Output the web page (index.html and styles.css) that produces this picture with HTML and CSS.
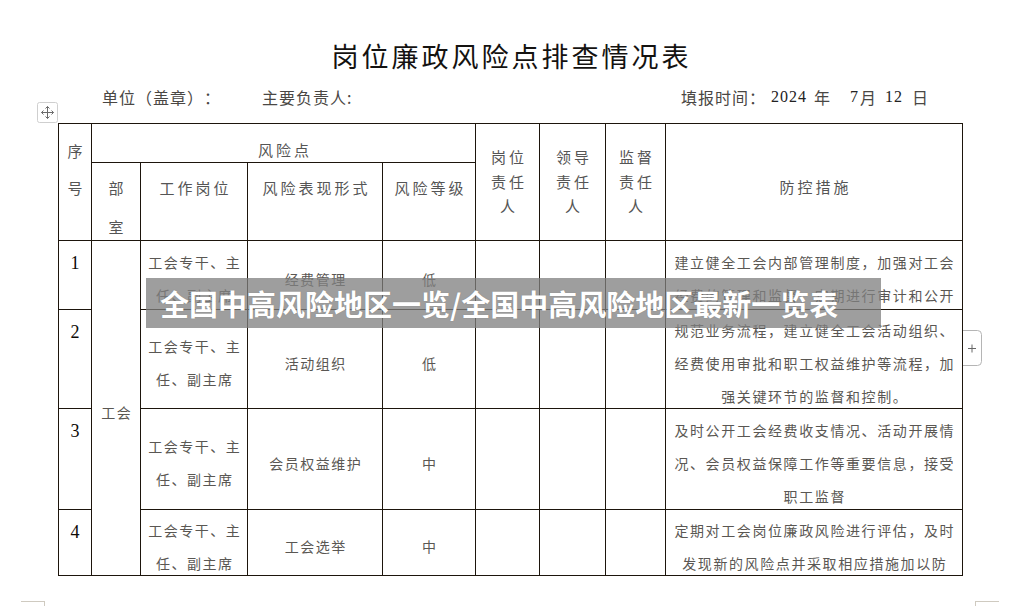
FILE: index.html
```html
<!DOCTYPE html>
<html lang="zh-CN">
<head>
<meta charset="utf-8">
<title>岗位廉政风险点排查情况表</title>
<link rel="stylesheet" href="styles.css">
</head>
<body>
<div class="page">
  <div class="doc">
    <h1 class="title">岗位廉政风险点排查情况表</h1>
    <div class="meta">
      <span class="unit">单位（盖章）：</span>
      <span class="owner">主要负责人:</span>
      <span class="date">填报时间：<span class="num n-year">2024</span><span class="u u-year">年</span><span class="num n-mon">7</span><span class="u u-mon">月</span><span class="num n-day">12</span><span class="u u-day">日</span></span>
    </div>
    <table class="grid">
      <colgroup>
        <col class="c-seq"><col class="c-dept"><col class="c-post"><col class="c-form"><col class="c-level">
        <col class="c-p1"><col class="c-p2"><col class="c-p3"><col class="c-measure">
      </colgroup>
      <tr class="h1">
        <td class="hd h-seq" rowspan="2">序<br>号</td>
        <td class="hd h-group" colspan="4">风险点</td>
        <td class="hd h-person" rowspan="2">岗位<br>责任<br>人</td>
        <td class="hd h-person" rowspan="2">领导<br>责任<br>人</td>
        <td class="hd h-person" rowspan="2">监督<br>责任<br>人</td>
        <td class="hd h-measure" rowspan="2">防控措施</td>
      </tr>
      <tr class="h2">
        <td class="hd h-sub"><div class="drop">部<br>室</div></td>
        <td class="hd h-sub">工作岗位</td>
        <td class="hd h-sub">风险表现形式</td>
        <td class="hd h-sub">风险等级</td>
      </tr>
      <tr class="r1">
        <td class="seq">1</td>
        <td class="cell" rowspan="4"><div class="stack"><div>工会</div></div></td>
        <td class="cell"><div class="stack"><div>工会专干、主</div><div>任、副主席</div></div></td>
        <td class="cell"><div class="stack"><div>经费管理</div></div></td>
        <td class="cell"><div class="stack"><div>低</div></div></td>
        <td class="cell"></td><td class="cell"></td><td class="cell"></td>
        <td class="cell measure"><div class="stack"><div>建立健全工会内部管理制度，加强对工会</div><div>经费的管理和监督，定期进行审计和公开</div></div></td>
      </tr>
      <tr class="r2">
        <td class="seq">2</td>
        <td class="cell"><div class="stack"><div>工会专干、主</div><div>任、副主席</div></div></td>
        <td class="cell"><div class="stack"><div>活动组织</div></div></td>
        <td class="cell"><div class="stack"><div>低</div></div></td>
        <td class="cell"></td><td class="cell"></td><td class="cell"></td>
        <td class="cell measure"><div class="stack"><div>规范业务流程，建立健全工会活动组织、</div><div>经费使用审批和职工权益维护等流程，加</div><div>强关键环节的监督和控制。</div></div></td>
      </tr>
      <tr class="r3">
        <td class="seq">3</td>
        <td class="cell"><div class="stack"><div>工会专干、主</div><div>任、副主席</div></div></td>
        <td class="cell"><div class="stack"><div>会员权益维护</div></div></td>
        <td class="cell"><div class="stack"><div>中</div></div></td>
        <td class="cell"></td><td class="cell"></td><td class="cell"></td>
        <td class="cell measure"><div class="stack"><div>及时公开工会经费收支情况、活动开展情</div><div>况、会员权益保障工作等重要信息，接受</div><div>职工监督</div></div></td>
      </tr>
      <tr class="r4">
        <td class="seq">4</td>
        <td class="cell"><div class="stack"><div>工会专干、主</div><div>任、副主席</div></div></td>
        <td class="cell"><div class="stack"><div>工会选举</div></div></td>
        <td class="cell"><div class="stack"><div>中</div></div></td>
        <td class="cell"></td><td class="cell"></td><td class="cell"></td>
        <td class="cell measure"><div class="stack"><div>定期对工会岗位廉政风险进行评估，及时</div><div>发现新的风险点并采取相应措施加以防</div></div></td>
      </tr>
    </table>
  </div>

  <div class="move-handle" aria-hidden="true">
    <svg width="21" height="21" viewBox="0 0 21 21">
      <rect x="0.5" y="0.5" width="20" height="20" rx="2" fill="#fff" stroke="#cfcfcf"/>
      <g stroke="#6a6a6a" fill="none" stroke-width="1">
        <path d="M10.5 4.5v12M4.5 10.5h12"/>
        <path d="M8.5 6.5l2-2 2 2M8.5 14.5l2 2 2-2M6.5 8.5l-2 2 2 2M14.5 8.5l2 2-2 2"/>
      </g>
    </svg>
  </div>

  <div class="add-handle" aria-hidden="true">
    <svg width="20" height="37" viewBox="0 0 20 37">
      <path d="M0 0.5H14.5Q18.5 0.5 18.5 4.5V31.5Q18.5 35.5 14.5 35.5H0" fill="none" stroke="#b5b5b5"/>
      <path d="M5 18.5h8M9 14.5v8" stroke="#666" fill="none"/>
    </svg>
  </div>

  <div class="mark mark-left" aria-hidden="true"></div>
  <div class="mark mark-right" aria-hidden="true"></div>

  <div class="banner">全国中高风险地区一览/全国中高风险地区最新一览表</div>
</div>
</body>
</html>
```

FILE: styles.css
```css
* { box-sizing: border-box; margin: 0; padding: 0; }
html, body { background: #fff; }
body {
  font-family: "Noto Sans CJK SC", "Liberation Sans", sans-serif;
  color: #333;
  text-spacing-trim: space-all;
}

.page {
  position: relative;
  width: 1028px;
  height: 606px;
  overflow: hidden;
}

.doc {
  width: 904px;
  margin-left: 58px;
  padding-top: 36px;
}

.title {
  font-size: 27px;
  font-weight: 400;
  line-height: 40px;
  height: 40px;
  text-align: center;
  letter-spacing: 3px;
  padding-left: 3px;
  color: #141210;
}

.meta {
  margin-top: 10px;
  height: 22px;
  display: flex;
  align-items: center;
  font-size: 16px;
  line-height: 22px;
  letter-spacing: 1px;
  color: #4a4744;
  white-space: nowrap;
}
.unit { margin-left: 44px; }
.owner { margin-left: 41px; }
.date { margin-left: auto; margin-right: 33px; display: flex; align-items: center; }
.num { font-family: "Liberation Serif", serif; color: #222; font-size: 16px; }
.n-year { margin-left: 5px; }
.u-year { margin-left: 7px; }
.n-mon { margin-left: 19px; }
.u-mon { margin-left: 1px; }
.n-day { margin-left: 8px; }
.u-day { margin-left: 9px; }

.grid {
  margin-top: 15px;
  border-collapse: collapse;
  table-layout: fixed;
  width: 904px;
}
.c-seq { width: 33px; }
.c-dept { width: 49px; }
.c-post { width: 107px; }
.c-form { width: 135px; }
.c-level { width: 93px; }
.c-p1 { width: 64px; }
.c-p2 { width: 66px; }
.c-p3 { width: 60px; }
.c-measure { width: 297px; }

.grid td {
  border: 1px solid #1d150c;
  text-align: center;
  padding: 0;
  white-space: nowrap;
}

.h1 { height: 39px; }
.h2 { height: 78px; }
.r1 { height: 69px; }
.r2 { height: 99px; }
.r3 { height: 101px; }
.r4 { height: 66px; }

.hd {
  font-size: 15px;
  letter-spacing: 3px;
  color: #555;
  font-weight: 400;
}
.grid td.hd { padding-left: 3px; }
.grid td.h-seq {
  vertical-align: top;
  padding-top: 8px;
  line-height: 37px;
}
.grid td.h-group {
  vertical-align: middle;
  padding-top: 14px;
  line-height: 20px;
}
.grid td.h-person {
  vertical-align: middle;
  line-height: 24.5px;
}
.grid td.h-measure {
  vertical-align: middle;
  padding-top: 10px;
  line-height: 20px;
}
.grid td.h-sub {
  vertical-align: top;
  padding-top: 5px;
  line-height: 39px;
}
.drop { height: 0; overflow: visible; }

.grid td.seq {
  vertical-align: top;
  padding-top: 12px;
  line-height: 20px;
  font-family: "Liberation Serif", serif;
  font-size: 18px;
  color: #0d0a06;
}

.grid td.cell {
  vertical-align: middle;
  padding-top: 8px;
  padding-left: 1.5px;
  font-size: 14px;
  letter-spacing: 1.5px;
  color: #5a5753;
}
.grid td.measure {
  letter-spacing: 1.6px;
  padding-left: 1.6px;
}
.stack {
  height: 0;
  display: flex;
  flex-direction: column;
  justify-content: center;
  line-height: 33px;
}

.move-handle {
  position: absolute;
  left: 37px;
  top: 102px;
  width: 21px;
  height: 21px;
  line-height: 0;
}
.add-handle {
  position: absolute;
  left: 963px;
  top: 330px;
  width: 20px;
  height: 37px;
  line-height: 0;
}

.mark {
  position: absolute;
  top: 601px;
  width: 24px;
  height: 6px;
  border-top: 1px solid #cfcac0;
}
.mark-left {
  left: 21px;
  border-right: 1px solid #cfcac0;
}
.mark-right {
  left: 975px;
  border-left: 1px solid #cfcac0;
}

.banner {
  position: absolute;
  left: 146px;
  top: 278px;
  width: 735px;
  height: 50px;
  display: flex;
  align-items: center;
  padding-left: 14px;
  background: rgba(128, 128, 128, 0.76);
  color: #fff;
  font-size: 29px;
  font-weight: 700;
  line-height: 1;
  white-space: nowrap;
  text-shadow: 0 0 1px rgba(0, 0, 0, 0.25);
}
```
